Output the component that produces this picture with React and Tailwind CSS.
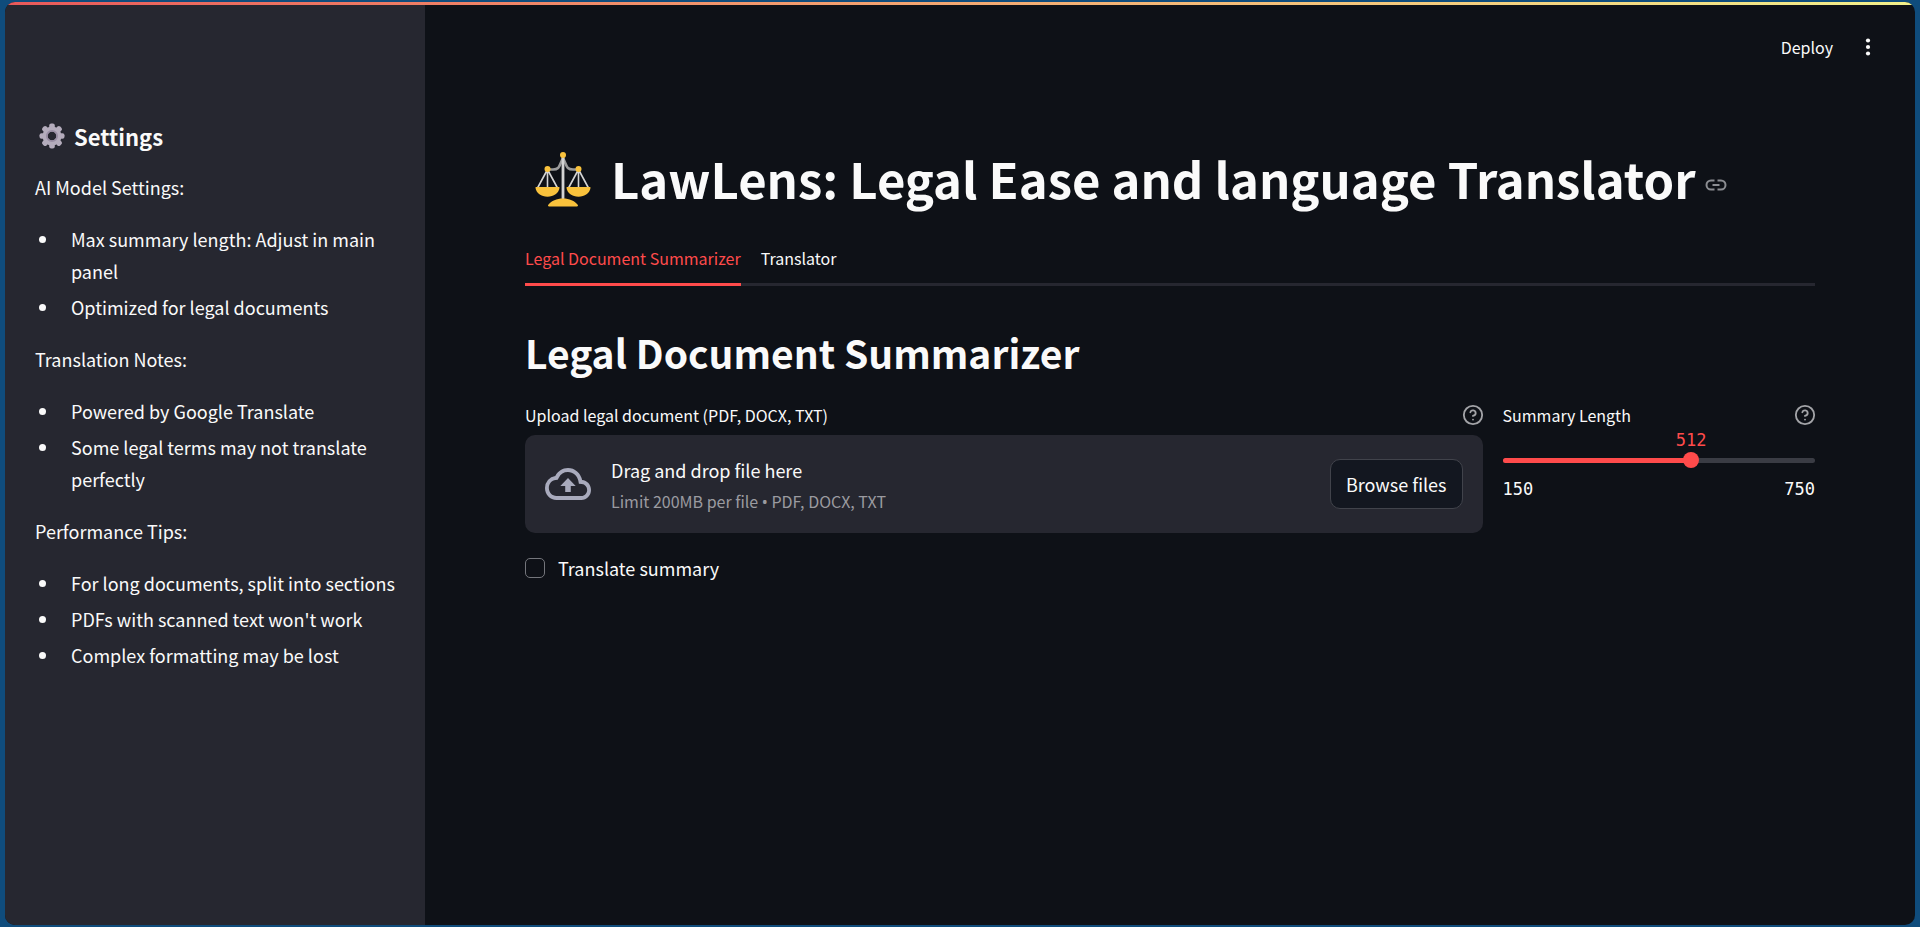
import { useState } from "react";

const SIDEBAR_SECTIONS = [
  {
    title: "AI Model Settings:",
    items: ["Max summary length: Adjust in main panel", "Optimized for legal documents"],
  },
  {
    title: "Translation Notes:",
    items: ["Powered by Google Translate", "Some legal terms may not translate perfectly"],
  },
  {
    title: "Performance Tips:",
    items: [
      "For long documents, split into sections",
      "PDFs with scanned text won't work",
      "Complex formatting may be lost",
    ],
  },
];

function GearIcon() {
  const teeth = [0, 45, 90, 135, 180, 225, 270, 315];
  return (
    <svg viewBox="0 0 26 26" className="size-[26px]" aria-hidden="true">
      <g fill="#b4acbc">
        {teeth.map((a) => (
          <rect key={a} x="10.2" y="0.5" width="5.6" height="6" rx="2" transform={`rotate(${a} 13 13)`} />
        ))}
      </g>
      <circle cx="13" cy="13" r="7" fill="none" stroke="#b4acbc" strokeWidth="5" />
      <circle cx="13" cy="13" r="5.2" fill="none" stroke="#998ea4" strokeWidth="1.8" />
    </svg>
  );
}

function ScalesIcon() {
  return (
    <svg viewBox="0 0 56 56" className="size-14 shrink-0" aria-hidden="true">
      <g fill="none" stroke="#9b9b9b" strokeWidth="2.6">
        <path d="M13 18.5h5c5 0 6-2 7.500-6L28 7l2.500 5.500c1.500 4 2.500 6 7.500 6h5" />
      </g>
      <path d="M28 4v44" stroke="#d3d3d3" strokeWidth="2.800" />
      <g fill="none" stroke="#d3d3d3" strokeWidth="1.600" strokeLinejoin="round">
        <path d="M12.500 18.500 2.500 37M12.500 18.500 22.500 37M12.500 18.500V37" />
        <path d="M43.500 18.500 33.500 37M43.500 18.500 53.500 37M43.500 18.500V37" />
      </g>
      <g fill="#f9c23c">
        <circle cx="28" cy="4" r="3" />
        <circle cx="12.500" cy="18" r="3" />
        <circle cx="43.500" cy="18" r="3" />
        <path d="M1.200 36h22.600c.5 0 .8.500.7 1C23.800 42 18.700 45.700 12.500 45.700S1.200 42 .5 37c-.1-.5.200-1 .7-1z" />
        <path d="M32.200 36h22.600c.5 0 .8.500.7 1-.7 5-5.800 8.700-12 8.700S32.200 42 31.500 37c-.1-.5.200-1 .7-1z" />
        <path d="M28 47.500c6.500 0 11.500 2.500 14.500 6 .9 1 .5 2-.7 2H14.200c-1.200 0-1.600-1-.7-2 3-3.500 8-6 14.500-6z" />
      </g>
    </svg>
  );
}

function LinkIcon() {
  return (
    <svg viewBox="0 0 24 24" className="size-6" fill="none" stroke="#8b8d92" strokeWidth="2" aria-hidden="true">
      <path d="M10.500 7.500H7a4.500 4.500 0 0 0 0 9h3.500M13.500 7.500H17a4.500 4.500 0 0 1 0 9h-3.500M8.500 12h7" />
    </svg>
  );
}

function HelpIcon() {
  return (
    <svg viewBox="0 0 24 24" className="size-[22px]" fill="none" stroke="currentColor" strokeWidth="2" strokeLinecap="round" strokeLinejoin="round" aria-hidden="true">
      <circle cx="12" cy="12" r="10" />
      <path d="M9.090 9a3 3 0 0 1 5.830 1c0 2-3 3-3 3" />
      <path d="M12 17h.01" />
    </svg>
  );
}

function HelpButton({ label }) {
  return (
    <button type="button" aria-label={label} className="-mr-px text-[#a3a4a8]">
      <HelpIcon />
    </button>
  );
}

function CloudUploadIcon() {
  return (
    <svg viewBox="0 0 24 16" className="h-8 w-[46px] shrink-0" fill="#a9abbd" aria-hidden="true" preserveAspectRatio="none">
      <path d="M19.350 6.040A7.490 7.490 0 0 0 12 0C9.110 0 6.600 1.640 5.350 4.040A5.994 5.994 0 0 0 0 10c0 3.310 2.690 6 6 6h13c2.760 0 5-2.240 5-5 0-2.640-2.050-4.780-4.650-4.960zM19 14H6c-2.210 0-4-1.790-4-4 0-2.050 1.530-3.760 3.560-3.970l1.070-.11.5-.95A5.469 5.469 0 0 1 12 2c2.620 0 4.880 1.860 5.390 4.430l.3 1.500 1.530.11A2.980 2.980 0 0 1 22 11c0 1.650-1.350 3-3 3z" />
      <path d="M8 9h2.550v3h2.900V9H16l-4-4z" />
    </svg>
  );
}

function Sidebar() {
  return (
    <aside className="w-[420px] shrink-0 bg-[#262730] px-[30px] pt-[115px] text-[18px] leading-8">
      <h3 className="mb-[19px] flex items-center gap-[9px] pl-1 text-[22px] font-semibold">
        <GearIcon />
        Settings
      </h3>
      <div className="flex flex-col gap-5">
        {SIDEBAR_SECTIONS.map((section) => (
          <section key={section.title} className="flex flex-col gap-5">
            <p>{section.title}</p>
            <ul className="flex flex-col gap-1">
              {section.items.map((item) => (
                <li
                  key={item}
                  className="flex before:mt-[13px] before:mr-[25px] before:ml-1 before:size-[7px] before:shrink-0 before:rounded-full before:bg-[#fafafa]"
                >
                  {item}
                </li>
              ))}
            </ul>
          </section>
        ))}
      </div>
    </aside>
  );
}

function Tabs() {
  return (
    <div role="tablist" className="flex gap-5 text-[16px] leading-6 shadow-[inset_0_-3px_0_#262730]">
      <button type="button" role="tab" aria-selected="true" className="h-[53px] border-b-[3px] border-[#ff4b4b] text-[#ff4b4b]">
        Legal Document Summarizer
      </button>
      <button type="button" role="tab" aria-selected="false" className="h-[53px] border-b-[3px] border-transparent">
        Translator
      </button>
    </div>
  );
}

function Uploader() {
  return (
    <div className="min-w-0 grow basis-[calc(75%-20px)]">
      <div className="mb-2 flex h-6 items-center justify-between text-[16px]">
        <label htmlFor="browse">Upload legal document (PDF, DOCX, TXT)</label>
        <HelpButton label="About uploading" />
      </div>
      <div className="flex items-center gap-5 rounded-[10px] bg-[#262730] p-5">
        <CloudUploadIcon />
        <div className="flex grow flex-col gap-1">
          <span className="text-[18px] leading-[30px]">Drag and drop file here</span>
          <span className="text-[16px] leading-6 text-[#9b9ba0]">
            Limit 200MB per file <span className="font-['Noto_Sans',sans-serif] leading-none">•</span> PDF, DOCX, TXT
          </span>
        </div>
        <button id="browse" type="button" className="h-[50px] rounded-[10px] border border-[#41434b] bg-[#131720] px-[15px] text-[18px]">
          Browse files
        </button>
      </div>
    </div>
  );
}

const MIN = 150;
const MAX = 750;

function SummaryLength() {
  const [value, setValue] = useState(512);
  const percent = `${((value - MIN) / (MAX - MIN)) * 100}%`;
  return (
    <div className="min-w-0 grow basis-[calc(25%-20px)]">
      <div className="flex h-6 items-center justify-between text-[16px]">
        <label htmlFor="length">Summary Length</label>
        <HelpButton label="About summary length" />
      </div>
      <div className="relative mt-[31px] h-[5px] rounded-full bg-[#3a3c44] font-['DejaVu_Sans_Mono',monospace]">
        <div className="h-full rounded-full bg-[#ff4b4b]" style={{ width: percent }} />
        <output htmlFor="length" className="absolute bottom-[9px] -translate-x-1/2 text-[17px] leading-7 text-[#ff4b4b]" style={{ left: percent }}>
          {value}
        </output>
        <input
          id="length"
          type="range"
          min={MIN}
          max={MAX}
          value={value}
          onChange={(e) => setValue(Number(e.target.value))}
          className="absolute -inset-x-2 -top-[6px] h-4 appearance-none bg-transparent [&::-webkit-slider-thumb]:size-4 [&::-webkit-slider-thumb]:appearance-none [&::-webkit-slider-thumb]:rounded-full [&::-webkit-slider-thumb]:bg-[#ff4b4b]"
        />
      </div>
      <div className="mt-3 flex justify-between font-['DejaVu_Sans_Mono',monospace] text-[17px] leading-7">
        <span>{MIN}</span>
        <span>{MAX}</span>
      </div>
    </div>
  );
}

export default function App() {
  return (
    <div className="flex min-h-screen bg-[#0f4c7c] px-[5px] py-[2px] font-['Noto_Sans_CJK_SC',sans-serif] text-[#fafafa]">
      <div className="flex grow flex-col overflow-hidden rounded-[10px] bg-[#0e1117]">
        <div className="h-[3px] bg-linear-to-r from-[#e8595a] to-[#f2f08a]" />
        <div className="flex grow">
          <Sidebar />
          <div className="min-w-0 grow">
            <header className="flex h-[84px] items-center justify-end gap-7 pr-10">
              <button type="button" className="text-[16px]">Deploy</button>
              <button type="button" aria-label="Main menu">
                <svg viewBox="0 0 14 18" className="h-[18px] w-[14px]" fill="#fafafa" aria-hidden="true">
                  <circle cx="7" cy="2.500" r="2.100" />
                  <circle cx="7" cy="9" r="2.100" />
                  <circle cx="7" cy="15.500" r="2.100" />
                </svg>
              </button>
            </header>
            <main className="px-[100px] pt-[58px]">
              <h1 className="mb-5 flex h-[66px] items-center pb-[2px] pl-[10px] text-[49px] leading-[64px] font-bold">
                <ScalesIcon />
                <span className="ml-5 pb-[2px]">LawLens: Legal Ease and language Translator</span>
                <a href="#lawlens" aria-label="Link to heading" className="mt-3 ml-2">
                  <LinkIcon />
                </a>
              </h1>
              <Tabs />
              <h2 className="mt-[39px] text-[39px] leading-[54px] font-semibold">Legal Document Summarizer</h2>
              <div className="mt-6 flex gap-5">
                <Uploader />
                <SummaryLength />
              </div>
              <label className="mt-[19px] flex w-fit items-center gap-[13px] text-[18px] leading-8">
                <input type="checkbox" className="size-5 appearance-none rounded-[5px] border border-[#74767c] checked:bg-[#ff4b4b]" />
                Translate summary
              </label>
            </main>
          </div>
        </div>
      </div>
    </div>
  );
}
